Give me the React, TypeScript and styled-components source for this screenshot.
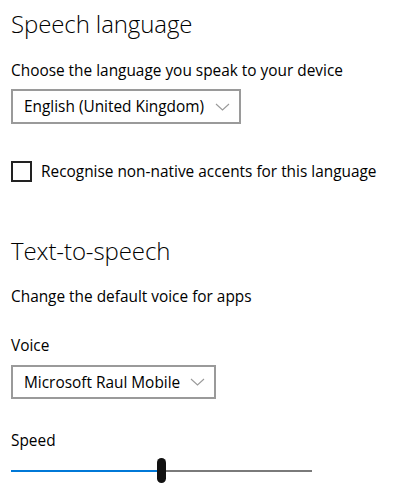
import React from "react";
import styled, { createGlobalStyle } from "styled-components";

const GlobalStyle = createGlobalStyle`
  html, body {
    margin: 0;
    padding: 0;
    background: #ffffff;
  }
  body {
    font-family: "Open Sans", "Noto Sans", Arial, sans-serif;
    color: #000000;
  }
`;

const Page = styled.div`
  width: 400px;
  height: 488px;
  box-sizing: border-box;
  padding: 9px 0 0 11px;
  display: flex;
  flex-direction: column;
  align-items: flex-start;
  overflow: hidden;
`;

const Heading = styled.h2<{ $top?: number }>`
  margin: ${(p) => p.$top ?? 0}px 0 0 0;
  font-size: 24px;
  font-weight: 300;
  line-height: 30px;
  letter-spacing: -0.1px;
  white-space: nowrap;
`;

const Text = styled.div<{ $top?: number }>`
  margin-top: ${(p) => p.$top ?? 0}px;
  font-size: 15.4px;
  line-height: 20px;
  white-space: nowrap;
`;

const Select = styled.div<{ $width: number; $height: number; $top?: number }>`
  margin-top: ${(p) => p.$top ?? 0}px;
  width: ${(p) => p.$width}px;
  height: ${(p) => p.$height}px;
  box-sizing: border-box;
  border: 2px solid #9a9a9a;
  display: flex;
  align-items: center;
  justify-content: space-between;
  padding: 0 9px 0 11px;
  font-size: 15.4px;
  white-space: nowrap;
`;

const Chevron = () => (
  <svg width="15" height="8" viewBox="0 0 15 8">
    <path d="M1 1 L7.5 7 L14 1" fill="none" stroke="#9a9a9a" strokeWidth="1.1" />
  </svg>
);

const CheckRow = styled.label<{ $top?: number }>`
  margin-top: ${(p) => p.$top ?? 0}px;
  display: flex;
  align-items: center;
  gap: 9px;
  font-size: 15.4px;
  line-height: 20px;
  white-space: nowrap;
`;

const Box = styled.span`
  width: 21px;
  height: 21px;
  box-sizing: border-box;
  border: 2px solid #222;
  flex: none;
`;

const Slider = styled.div<{ $top?: number }>`
  margin-top: ${(p) => p.$top ?? 0}px;
  width: 301px;
  height: 25px;
  display: flex;
  align-items: center;
`;

const Track = styled.div<{ $fill: string; $grow: number }>`
  height: 2px;
  background: ${(p) => p.$fill};
  flex: ${(p) => p.$grow};
`;

const Thumb = styled.div`
  width: 9px;
  height: 25px;
  border-radius: 4.5px;
  background: #111;
  flex: none;
`;

export default function App() {
  return (
    <>
      <GlobalStyle />
      <Page>
        <Heading>Speech language</Heading>
        <Text $top={22}>Choose the language you speak to your device</Text>
        <Select $width={230} $height={35} $top={8}>
          <span>English (United Kingdom)</span>
          <Chevron />
        </Select>
        <CheckRow $top={37}>
          <Box />
          <span>Recognise non-native accents for this language</span>
        </CheckRow>
        <Heading $top={54}>Text-to-speech</Heading>
        <Text $top={21}>Change the default voice for apps</Text>
        <Text $top={29}>Voice</Text>
        <Select $width={205} $height={34} $top={9}>
          <span>Microsoft Raul Mobile</span>
          <Chevron />
        </Select>
        <Text $top={32}>Speed</Text>
        <Slider $top={7}>
          <Track $fill="#0078d7" $grow={146} />
          <Thumb />
          <Track $fill="#7a7a7a" $grow={146} />
        </Slider>
      </Page>
    </>
  );
}
